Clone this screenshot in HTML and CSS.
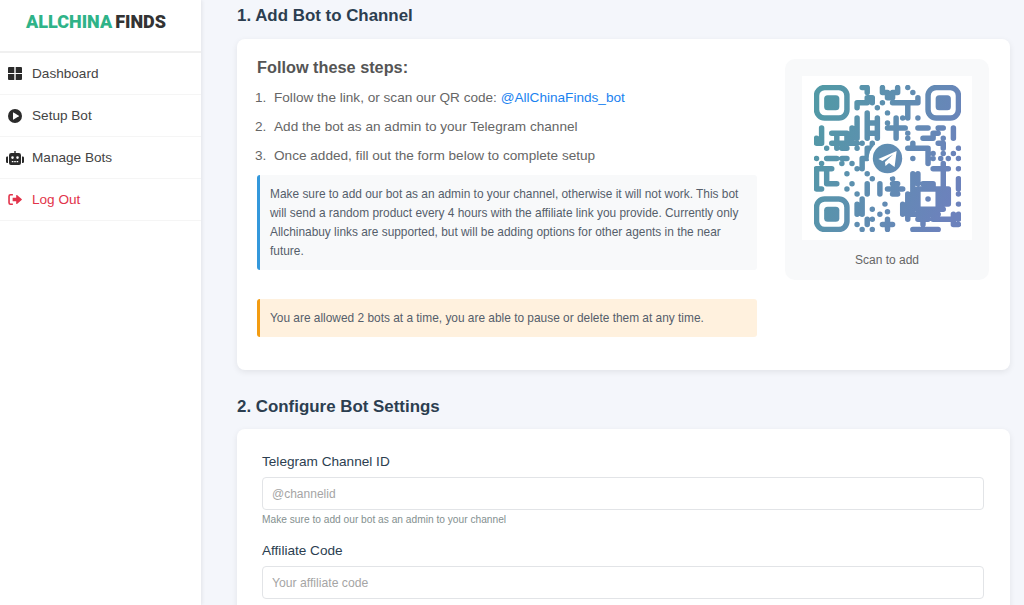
FILE: index.html
```html
<!DOCTYPE html>
<html>
<head>
    <title>Setup Bot</title>
    <link rel="stylesheet" href="styles.css">
</head>
<body>
    <aside class="sidebar">
        <div class="logo"><span class="logoGreen">ALLCHINA</span><span class="logoDark">FINDS</span></div>
        <nav>
            <a class="navItem" href="#">
                <span class="navSlot"><svg class="iconGrid" viewBox="0 0 14 13"><path fill="#2b2b2b" d="M0 1a1 1 0 0 1 1-1h5.300v5.900H0zM7.700 0H13a1 1 0 0 1 1 1v4.900H7.700zM0 7.100h6.300V13H1a1 1 0 0 1-1-1zM7.700 7.100H14V12a1 1 0 0 1-1 1H7.700z"/></svg></span>
                Dashboard
            </a>
            <a class="navItem" href="#">
                <span class="navSlot"><svg class="iconPlay" viewBox="0 0 14 14"><circle cx="7" cy="7" r="7" fill="#2b2b2b"/><path fill="#ffffff" d="M5 3.700v6.600a.4.4 0 0 0 .6.3l5.200-3.300a.4.4 0 0 0 0-.6L5.600 3.400a.4.4 0 0 0-.6.3z"/></svg></span>
                Setup Bot
            </a>
            <a class="navItem" href="#">
                <span class="navSlot"><svg class="iconRobot" viewBox="0 0 18 14"><path fill="#2b2b2b" fill-rule="evenodd" d="M8.300 0h1.400v2h3.100A2.200 2.200 0 0 1 15 4.200V12a2 2 0 0 1-2 2H5a2 2 0 0 1-2-2V4.200A2.200 2.200 0 0 1 5.200 2h3.100zM6.500 5.300a1.300 1.300 0 1 0 0 2.600 1.300 1.300 0 0 0 0-2.600zM11.500 5.300a1.300 1.300 0 1 0 0 2.600 1.300 1.300 0 0 0 0-2.600zM5.800 10v1.300h1.600V10zM8.200 10v1.300h1.600V10zM10.600 10v1.300h1.600V10zM0 6.800a1.300 1.300 0 0 1 1.300-1.300H2V12h-.7A1.300 1.300 0 0 1 0 10.700zM16 5.500h.7A1.300 1.300 0 0 1 18 6.800v3.900a1.300 1.300 0 0 1-1.300 1.300H16z"/></svg></span>
                Manage Bots
            </a>
            <a class="navItem navLogout" href="#">
                <span class="navSlot"><svg class="iconLogout" viewBox="0 0 16 13"><path fill="#e2334a" d="M10.400 1.200 15.800 6a.6.6 0 0 1 0 1l-5.400 4.800a.6.6 0 0 1-1-.5V8.600H5.200V4.400h4.200V1.700a.6.6 0 0 1 1-.5zM5.500 0v1.900H2.800a.9.900 0 0 0-.9.900v7.400a.9.900 0 0 0 .9.900h2.700V13H2.700A2.700 2.700 0 0 1 0 10.300V2.700A2.700 2.700 0 0 1 2.700 0z"/></svg></span>
                Log Out
            </a>
        </nav>
    </aside>

    <main class="content">
        <h2 class="sectionTitle firstTitle">1. Add Bot to Channel</h2>
        <section class="card stepsCard">
            <div class="stepsLeft">
                <h3>Follow these steps:</h3>
                <ol class="stepList">
                    <li><span>Follow the link, or scan our QR code: <a href="#">@AllChinaFinds_bot</a></span></li>
                    <li><span>Add the bot as an admin to your Telegram channel</span></li>
                    <li><span>Once added, fill out the form below to complete setup</span></li>
                </ol>
                <div class="note noteInfo">Make sure to add our bot as an admin to your channel, otherwise it will not work. This bot will send a random product every 4 hours with the affiliate link you provide. Currently only Allchinabuy links are supported, but will be adding options for other agents in the near future.</div>
                <div class="note noteWarn">You are allowed 2 bots at a time, you are able to pause or delete them at any time.</div>
            </div>
            <div class="qrBox">
                <div class="qrImage">
                    <svg class="qrCode" viewBox="-.5 -.5 29 29">
                        <defs>
                            <linearGradient id="qrGrad" gradientUnits="userSpaceOnUse" x1="0" y1="4" x2="29" y2="14">
                                <stop offset="0" stop-color="#5299a6"/>
                                <stop offset="1" stop-color="#6c82bc"/>
                            </linearGradient>
                        </defs>
                        <g fill="none" stroke="url(#qrGrad)" stroke-width="1.080" stroke-linecap="round" stroke-linejoin="round">
                            <rect x="0" y="0" width="6" height="6" rx="1.600"/>
                            <rect x="22" y="0" width="6" height="6" rx="1.600"/>
                            <rect x="0" y="22" width="6" height="6" rx="1.600"/>
                            <path d="M9 0h1v1M11 2v1M8 4v-1h2v-1h1M12 4h0M13 3h0M13 0v1h1v1h1v-1h1v-1M18 0h0M19 1h0M15 3h5v-1M18 3v3M20 6h0M14 5h0
                                M8 6v4M10 5v5M12 6v4M10 7h2M10 9h2M15.700 6v4M14 8h3.500M14 7h0M18 10h0M17 6h0
                                M20 8h2M24 8h1M23 9h1M21 10h2v-1M27 8v2M25 10h0M18 9h0
                                M1 8v3M0 10v1h1M2 12h0M3 9h3M4 9v3M7 8v3M6 9v2M3 11h5M5 12h1M8 12h0M9 11h0M11 11v1h-1v2h-1v2M8 16h0
                                M0 14h0M2 14h2M5 14h1M1 15h0M5 15h0M7 15h0M0 16v4h1M0 16h3M2 16v3h2M6 17h0M7 19h0M6 20h0M10 17h0M11 18h0M10 19v2M8 21h0
                                M15 18h0M15 19h1M14 20h3M15 21h1M12.500 19v2
                                M9 22v3M8 23v2M11 24h0M13.500 23h0M12.500 25h0M14 24.500h0M14 26v2M13 27h2M8 27h0M10 26v1M9 28h0M11 28h0M11 26h0
                                M19 11v1M18 12h4v3M19 14h0M24 11h1v1M28 12h0M27 13h0M25 13h0M23 13h0M23 14h0M24.500 14h0M26 14h0M28 14h0M23 16h3M25 15v6M28 16h0
                                M19 17v8M20 17v2M21 19h2v1h2M20 20h4v4h-4zM24 20h2v3h-2M25 21v2M28 18v2M28 21h0M28 23h0M18 21v5M17 23v2M18 25h6M24 24h1
                                M20 26h2M21 26v1M23 25v1h4M27 25v2h1M19 28h5M28 25v1"/>
                        </g>
                        <rect x="1.500" y="1.500" width="3" height="3" rx=".7" fill="url(#qrGrad)"/>
                        <rect x="23.500" y="1.500" width="3" height="3" rx=".7" fill="url(#qrGrad)"/>
                        <rect x="1.500" y="23.500" width="3" height="3" rx=".7" fill="url(#qrGrad)"/>
                        <circle cx="22" cy="22" r=".55" fill="url(#qrGrad)"/>
                        <circle cx="14" cy="14" r="3.700" fill="#fff"/>
                        <circle cx="14" cy="14" r="2.900" fill="url(#qrGrad)"/>
                        <path fill="#fff" d="M12.200 14.100 15.800 12.500 15.400 15.700 14.300 14.900 13.600 15.500 13.500 14.700 15.100 13.200 13 14.500z"/>
                    </svg>
                </div>
                <p class="qrCaption">Scan to add</p>
            </div>
        </section>

        <h2 class="sectionTitle">2. Configure Bot Settings</h2>
        <section class="card formCard">
            <label for="channelId">Telegram Channel ID</label>
            <input type="text" id="channelId" placeholder="@channelid">
            <small>Make sure to add our bot as an admin to your channel</small>
            <label for="affiliateCode">Affiliate Code</label>
            <input type="text" id="affiliateCode" class="inputLast" placeholder="Your affiliate code">
        </section>
    </main>
</body>
</html>
```

FILE: styles.css
```css
html, body {
    height: 605px;
    overflow: hidden;
}

body {
    margin: 0;
    display: flex;
    font-family: "Liberation Sans", Arial, sans-serif;
    background-color: #f4f6fb;
}

.sidebar {
    width: 201px;
    flex-shrink: 0;
    background-color: #ffffff;
    box-shadow: 1px 0 4px rgba(0, 0, 0, 0.08);
}

.logo {
    height: 53px;
    box-sizing: border-box;
    display: flex;
    padding: 11px 0 0 26px;
    font-family: Roboto, sans-serif;
    font-weight: 900;
    font-size: 18px;
    line-height: 21px;
    border-bottom: 2px solid #f0f0f0;
}

.logoGreen {
    color: #2fb388;
    margin-right: 3px;
}

.logoDark {
    color: #333333;
}

.navItem {
    height: 41px;
    display: flex;
    align-items: center;
    font-size: 13.6px;
    color: #444444;
    text-decoration: none;
    border-bottom: 1px solid #f5f5f5;
}

.navSlot {
    width: 32px;
    display: flex;
    justify-content: center;
    padding-right: 3px;
    box-sizing: border-box;
}

.iconGrid {
    width: 14px;
    height: 13px;
}

.iconPlay {
    width: 14px;
    height: 14px;
}

.iconRobot {
    width: 18px;
    height: 14px;
}

.iconLogout {
    width: 14px;
    height: 11px;
}

.navLogout {
    color: #e2334a;
}

.content {
    flex: 1;
    min-width: 0;
    padding: 0 14px 0 36px;
}

.sectionTitle {
    margin: 0;
    font-size: 16.9px;
    line-height: 20px;
    color: #2c3e50;
    padding: 27px 0 12px;
}

.firstTitle {
    padding-top: 6px;
    padding-bottom: 13px;
}

.card {
    background-color: #ffffff;
    border-radius: 8px;
    box-shadow: 0 2px 6px rgba(0, 0, 0, 0.08);
}

.stepsCard {
    display: flex;
    gap: 28px;
    padding: 19px 21px 33px 20px;
    height: 331px;
    box-sizing: border-box;
}

.stepsLeft {
    width: 500px;
}

.stepsLeft h3 {
    margin: 0;
    font-size: 16.3px;
    line-height: 18px;
    color: #555555;
}

.stepList {
    margin: 7px 0 0 -2px;
    padding: 0;
    list-style: none;
    counter-reset: step;
    font-size: 13.6px;
    line-height: 15px;
    color: #666666;
}

.stepList li {
    padding: 7px 0;
    display: flex;
    counter-increment: step;
}

.stepList li::before {
    content: counter(step) ".";
    width: 19px;
    flex-shrink: 0;
}

.stepList a {
    color: #1a82f0;
    text-decoration: none;
}

.note {
    font-size: 11.9px;
    line-height: 19px;
    color: #555e6b;
    border-left: 3px solid;
    border-radius: 3px;
}

.noteInfo {
    margin-top: 5px;
    padding: 10px 10px 9px;
    background-color: #f8f9fa;
    border-left-color: #3498db;
}

.noteWarn {
    margin-top: 29px;
    padding: 10px 10px 9px;
    background-color: #fff1de;
    border-left-color: #f39c12;
}

.qrBox {
    width: 204px;
    height: 221px;
    box-sizing: border-box;
    flex-shrink: 0;
    margin-top: 1px;
    padding: 17px;
    background-color: #f8f9fa;
    border-radius: 10px;
}

.qrImage {
    height: 164px;
    background-color: #ffffff;
    display: flex;
    align-items: center;
    justify-content: center;
}

.qrCode {
    width: 147px;
    height: 147px;
}

.qrCaption {
    margin: 13px 0 0;
    text-align: center;
    font-size: 12px;
    line-height: 14px;
    color: #666666;
}

.formCard {
    padding: 25px 26px 40px 25px;
}

.formCard label {
    display: block;
    font-size: 13.6px;
    line-height: 16px;
    color: #2c3e50;
    margin-bottom: 7px;
}

.formCard input {
    display: block;
    width: 100%;
    box-sizing: border-box;
    height: 33px;
    padding: 0 9px;
    font-family: inherit;
    font-size: 12px;
    border: 1px solid #e2e4e7;
    border-radius: 4px;
    background-color: #ffffff;
}

.formCard .inputLast {
    font-size: 12.2px;
}

.formCard input::placeholder {
    color: #a5a5a5;
    opacity: 1;
}

.formCard small {
    display: block;
    margin: 4px 0 17px;
    font-size: 10.2px;
    line-height: 12px;
    color: #84908f;
}
```
